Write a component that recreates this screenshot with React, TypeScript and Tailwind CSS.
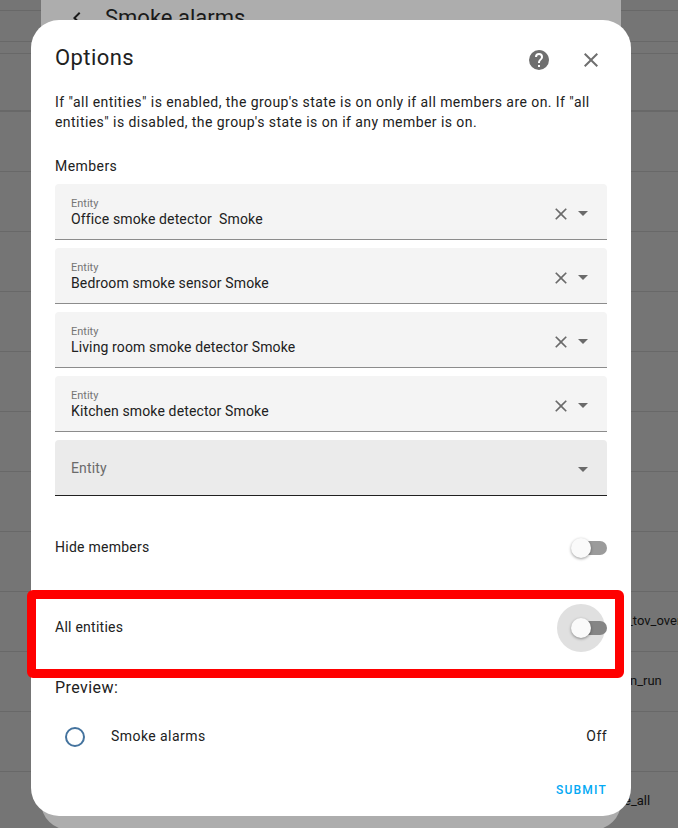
import { useState } from "react";
import type { ReactNode } from "react";

const CLOSE =
  "M19,6.41L17.59,5L12,10.59L6.41,5L5,6.41L10.59,12L5,17.59L6.41,19L12,13.41L17.59,19L19,17.59L13.41,12L19,6.41Z";
const HELP =
  "M15.07,11.25L14.17,12.17C13.45,12.89 13,13.5 13,15H11V14.5C11,13.39 11.45,12.39 12.17,11.67L13.41,10.41C13.78,10.05 14,9.55 14,9C14,7.89 13.1,7 12,7A2,2 0 0,0 10,9H8A4,4 0 0,1 12,5A4,4 0 0,1 16,9C16,9.88 15.64,10.67 15.07,11.25M13,19H11V17H13M12,2A10,10 0 0,0 2,12A10,10 0 0,0 12,22A10,10 0 0,0 22,12C22,6.47 17.5,2 12,2Z";
const MENU_DOWN = "M7,10L12,15L17,10H7Z";
const CIRCLE_OUTLINE =
  "M12,20A8,8 0 0,1 4,12A8,8 0 0,1 12,4A8,8 0 0,1 20,12A8,8 0 0,1 12,20M12,2A10,10 0 0,0 2,12A10,10 0 0,0 12,22A10,10 0 0,0 22,12A10,10 0 0,0 12,2Z";
const CHEVRON_LEFT = "M15.41,16.58L10.83,12L15.41,7.41L14,6L8,12L14,18L15.41,16.58Z";

function Icon({ path, className }: { path: string; className: string }) {
  return (
    <svg viewBox="0 0 24 24" fill="currentColor" aria-hidden="true" className={className}>
      <path d={path} />
    </svg>
  );
}

const listRows = [
  ...Array.from({ length: 8 }, () => ({ text: "", width: "w-12" })),
  { text: "_tov_over", width: "w-[51px]" },
  { text: "n_run", width: "w-12" },
  { text: "", width: "w-12" },
  { text: "e_all", width: "w-[54px]" },
];

function BackgroundList() {
  return (
    <div className="text-[13px] text-[#101010]">
      <div className="h-[11px] border-b border-[#686868]" />
      <div className="h-[31px] border-b border-[#686868]" />
      <div className="h-3 border-b border-[#686868]" />
      <div className="h-[58px] border-b-2 border-[#686868]" />
      <ul>
        {listRows.map((row, i) => (
          <li key={i} className="flex h-[60px] items-center justify-end border-b border-[#686868] pb-0.5">
            <span className={row.width}>{row.text}</span>
          </li>
        ))}
      </ul>
    </div>
  );
}

function EntityField({ id, initial }: { id: string; initial: string }) {
  const [value, setValue] = useState(initial);
  return (
    <div className="flex h-14 items-center rounded-t border-b border-[#8c8c8c] bg-[#f4f4f4] pr-3 pl-4">
      <div className="flex min-w-0 flex-1 flex-col">
        <label htmlFor={id} className="text-[11px] leading-4 tracking-normal text-[#757575]">
          Entity
        </label>
        <input
          id={id}
          type="text"
          value={value}
          onChange={(e) => setValue(e.target.value)}
          className="h-4 w-full bg-transparent pb-0.5 text-sm leading-4 tracking-[0.009375em] text-[#212121] outline-none"
        />
      </div>
      <div className="flex items-center pt-0.5 text-[#6a6a6a]">
        <button type="button" aria-label="Clear" onClick={() => setValue("")} className="pt-0.5">
          <Icon path={CLOSE} className="size-5" />
        </button>
        <button type="button" aria-label="Open list">
          <Icon path={MENU_DOWN} className="size-6" />
        </button>
      </div>
    </div>
  );
}

function EmptyEntityField() {
  return (
    <div className="flex h-14 items-center rounded-t border-b border-[#212121] bg-[#ebebeb] pr-3 pl-4">
      <input
        type="text"
        aria-label="Entity"
        placeholder="Entity"
        className="h-5 min-w-0 flex-1 bg-transparent text-sm tracking-[0.009375em] text-[#212121] outline-none placeholder:text-[#6a6a6a]"
      />
      <button type="button" aria-label="Open list" className="pt-0.5 text-[#6a6a6a]">
        <Icon path={MENU_DOWN} className="size-6" />
      </button>
    </div>
  );
}

function SwitchRow({ label, focused = false, children }: { label: string; focused?: boolean; children?: ReactNode }) {
  return (
    <div className="relative h-20">
      <label className="flex h-full items-center justify-between">
        <span className="pb-0.5 tracking-[0.0178em]">{label}</span>
        <span className="relative flex h-5 w-9 items-center">
          {focused && <span className="absolute -top-3.5 -left-3.5 size-12 rounded-full bg-[#e0e0e0]" />}
          <input type="checkbox" role="switch" className="peer absolute inset-0 z-10 cursor-pointer opacity-0" />
          <span
            className={
              focused
                ? "relative ml-1 h-3.5 w-8 rounded-full bg-[#858585]"
                : "relative ml-1 h-3.5 w-8 rounded-full bg-[#9b9b9b]"
            }
          />
          <span className="absolute top-0 left-0 size-5 rounded-full bg-[#fafafa] shadow-[0_1px_3px_rgba(0,0,0,0.4)] peer-checked:left-4" />
        </span>
      </label>
      {children}
    </div>
  );
}

const members = [
  "Office smoke detector  Smoke",
  "Bedroom smoke sensor Smoke",
  "Living room smoke detector Smoke",
  "Kitchen smoke detector Smoke",
];

export default function App() {
  return (
    <div className="relative h-screen overflow-hidden bg-[#757575] font-[Roboto,sans-serif]">
      <BackgroundList />

      <div className="absolute inset-0 flex justify-center pr-4">
        <section className="-mt-8 h-[862px] w-full max-w-[580px] rounded-[28px] bg-[#adadad] px-6 pt-9">
          <header className="flex items-center gap-4 text-[#1a1a1a]">
            <button type="button" aria-label="Back">
              <Icon path={CHEVRON_LEFT} className="size-6" />
            </button>
            <h1 className="text-[22px] leading-7">Smoke alarms</h1>
          </header>
        </section>
      </div>

      <div className="absolute inset-0 flex items-start justify-center pt-5 pr-4">
        <div
          role="dialog"
          aria-labelledby="dialog-title"
          className="w-full max-w-[600px] rounded-[28px] bg-white pt-4 text-sm leading-5 tracking-[0.03125em] text-[#212121]"
        >
          <header className="flex items-center gap-1 pr-4 pl-6">
            <h2 id="dialog-title" className="flex-1 pb-1 text-[22px] leading-7">
              Options
            </h2>
            <button type="button" aria-label="Help" className="flex size-12 items-center justify-center text-[#6f6f6f]">
              <Icon path={HELP} className="size-6" />
            </button>
            <button type="button" aria-label="Close" className="flex size-12 items-center justify-center text-[#6f6f6f]">
              <Icon path={CLOSE} className="size-6" />
            </button>
          </header>

          <div className="px-6 pt-2">
            <p>
              If "all entities" is enabled, the group's state is on only if all members are on. If "all entities" is
              disabled, the group's state is on if any member is on.
            </p>

            <h3 className="mt-6">Members</h3>
            <div className="mt-2 flex flex-col gap-2">
              {members.map((name, i) => (
                <EntityField key={name} id={`member-${i}`} initial={name} />
              ))}
              <EmptyEntityField />
            </div>

            <div className="mt-3">
              <SwitchRow label="Hide members" />
              <SwitchRow label="All entities" focused>
                <div className="pointer-events-none absolute -right-[17px] -bottom-2.5 -left-7 top-0.5 rounded-md border-[9px] border-[#ff0000]" />
              </SwitchRow>
            </div>

            <h3 className="mt-2 text-base leading-6">Preview:</h3>
            <div className="mt-4 flex h-10 items-center">
              <span className="flex w-10 justify-center pt-0.5 text-[#44739e]">
                <Icon path={CIRCLE_OUTLINE} className="size-6" />
              </span>
              <span className="flex-1 pl-4">Smoke alarms</span>
              <span>Off</span>
            </div>
          </div>

          <footer className="flex justify-end px-4 pt-4 pb-2">
            <button type="button" className="h-9 px-2 text-xs font-medium tracking-widest text-[#03a9f4] uppercase">
              Submit
            </button>
          </footer>
        </div>
      </div>
    </div>
  );
}
